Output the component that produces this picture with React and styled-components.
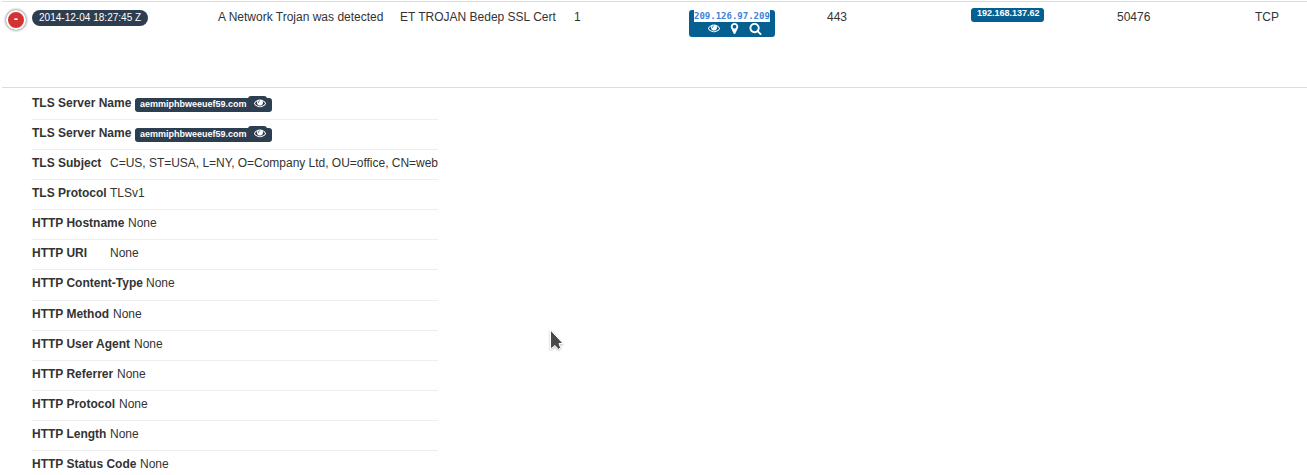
import React from "react";
import styled, { createGlobalStyle } from "styled-components";

const Global = createGlobalStyle`
  html, body { margin: 0; background: #fff; }
  body { overflow: hidden; }
  * { box-sizing: border-box; }
`;

const Page = styled.main`
  position: relative;
  width: 1307px;
  height: 475px;
  padding: 1px 0 0 2px;
  overflow: hidden;
  font: 12px/17px "Liberation Sans", Arial, sans-serif;
  color: #333;
`;

const AlertRow = styled.section`
  display: grid;
  grid-template-columns: 30px 186px 182px 174px 115px 138px 144px 146px 138px 1fr;
  align-items: start;
  height: 86px;
  border-top: 1px solid #ddd;
`;

const Cell = styled.div`
  padding-top: 7px;
  white-space: nowrap;
`;

const Toggle = styled.button`
  display: flex;
  align-items: center;
  justify-content: center;
  width: 20px;
  height: 20px;
  margin: 8px 0 0 4px;
  padding: 0 0 3px;
  border: 2px solid #fff;
  border-radius: 50%;
  background: #d33333;
  box-shadow: 0 0 3px #444;
  color: #fff;
  font: bold 12px/14px "Liberation Sans", Arial, sans-serif;
`;

const TimePill = styled.span`
  display: block;
  width: 116px;
  height: 16px;
  margin-top: 8px;
  padding-left: 7px;
  border-radius: 8px;
  background: #2c3e50;
  color: #fff;
  font-size: 10.05px;
  line-height: 15px;
  white-space: nowrap;
`;

const SourceIp = styled.div`
  width: 86px;
  height: 27px;
  margin-top: 8px;
  padding-left: 5px;
  border-radius: 3px;
  background: #065f91;
  color: #fff;
`;

const SelectedIp = styled.code`
  display: block;
  width: 76px;
  height: 12px;
  background: #fff;
  color: #3d82dc;
  font: bold 9px/13px "DejaVu Sans Mono", monospace;
  white-space: nowrap;
`;

const IconRow = styled.div`
  display: flex;
  align-items: center;
  gap: 8px;
  height: 12px;
  padding-left: 14px;
`;

const Icon = styled.svg`
  display: block;
  flex: none;
  width: ${(p) => p.$size}px;
  height: ${(p) => p.$size}px;
  fill: currentColor;
`;

const DestIp = styled.span`
  display: block;
  width: 73px;
  height: 14px;
  margin-top: 6px;
  padding-left: 6px;
  border-radius: 3px;
  background: #065f91;
  color: #fff;
  font: bold 9px/11px "Liberation Sans", Arial, sans-serif;
  white-space: nowrap;
`;

const Details = styled.dl`
  display: flex;
  flex-direction: column;
  width: 406px;
  margin: 0 0 0 30px;
  padding-top: 2px;
`;

const Divider = styled.div`
  height: 1px;
  background: #ddd;
`;

const Detail = styled.div`
  display: flex;
  flex: none;
  height: ${(p) => p.$height || 30}px;
  padding-top: 5px;
  border-bottom: 1px solid #eee;
  white-space: nowrap;
`;

const Label = styled.dt`
  flex: none;
  width: ${(p) => p.$width}px;
  font-weight: bold;
`;

const Value = styled.dd`
  margin: 0;
  letter-spacing: -0.02px;
`;

const ServerBadge = styled.span`
  display: flex;
  width: 137px;
  height: 14px;
  margin-top: 3px;
  padding-left: 5px;
  border-radius: 3px;
  background: #2c3e50;
  color: #fff;
  font: bold 9px/13px "Liberation Sans", Arial, sans-serif;
  letter-spacing: 0;
`;

const ServerName = styled.span`
  width: 108px;
`;

const EyeTab = styled.span`
  display: block;
  height: 14px;
  width: 19px;
  margin-top: -2px;
  padding: 1px 0 0 6px;
  border-radius: 3px;
  background: #2c3e50;
`;

const Cursor = styled.svg`
  position: absolute;
  left: 549px;
  top: 329px;
  width: 15px;
  height: 22px;
  filter: drop-shadow(0 1px 1px #0004);
`;

const paths = {
  eye: "M1664 960q-152-236-381-353 61 104 61 225 0 185-131.5 316.5t-316.5 131.5-316.5-131.5-131.5-316.5q0-121 61-225-229 117-381 353 133 205 333.5 326.5t434.5 121.5 434.5-121.5 333.5-326.5zm-720-384q0-20-14-34t-34-14q-125 0-214.5 89.5t-89.5 214.5q0 20 14 34t34 14 34-14 14-34q0-86 61-147t147-61q20 0 34-14t14-34zm848 384q0 34-20 69-140 230-376.5 368.5t-499.5 138.5-499.5-139-376.5-368q-20-35-20-69t20-69q140-229 376.5-368t499.5-139 499.5 139 376.5 368q20 35 20 69z",
  marker: "M1152 640q0-106-75-181t-181-75-181 75-75 181 75 181 181 75 181-75 75-181zm256 0q0 109-33 179l-364 774q-16 33-47.5 52t-67.5 19-67.5-19-46.5-52l-365-774q-33-70-33-179 0-212 150-362t362-150 362 150 150 362z",
  search: "M1216 832q0-185-131.5-316.5t-316.5-131.5-316.5 131.5-131.5 316.5 131.5 316.5 316.5 131.5 316.5-131.5 131.5-316.5zm512 832q0 52-38 90t-90 38q-54 0-90-38l-343-342q-179 124-399 124-143 0-273.5-55.5t-225-150-150-225-55.5-273.5 55.5-273.5 150-225 225-150 273.5-55.5 273.5 55.5 225 150 150 225 55.5 273.5q0 220-124 399l343 343q37 37 37 90z",
};

const Glyph = ({ name, size = 12 }) => (
  <Icon $size={size} viewBox="0 0 1792 1792" aria-hidden="true">
    <path d={paths[name]} />
  </Icon>
);

const details = [
  { label: "TLS Server Name", width: 103, server: "aemmiphbweeuef59.com" },
  { label: "TLS Server Name", width: 103, server: "aemmiphbweeuef59.com" },
  { label: "TLS Subject", width: 78, value: "C=US, ST=USA, L=NY, O=Company Ltd, OU=office, CN=web" },
  { label: "TLS Protocol", width: 78, value: "TLSv1" },
  { label: "HTTP Hostname", width: 96, value: "None" },
  { label: "HTTP URI", width: 78, value: "None" },
  { label: "HTTP Content-Type", width: 114, value: "None", height: 31 },
  { label: "HTTP Method", width: 81, value: "None" },
  { label: "HTTP User Agent", width: 102, value: "None" },
  { label: "HTTP Referrer", width: 85, value: "None" },
  { label: "HTTP Protocol", width: 87, value: "None" },
  { label: "HTTP Length", width: 78, value: "None" },
  { label: "HTTP Status Code", width: 108, value: "None" },
];

export default function App() {
  return (
    <Page>
      <Global />
      <AlertRow>
        <Toggle aria-label="Collapse">-</Toggle>
        <TimePill>2014-12-04 18:27:45 Z</TimePill>
        <Cell>A Network Trojan was detected</Cell>
        <Cell>ET TROJAN Bedep SSL Cert</Cell>
        <Cell>1</Cell>
        <SourceIp>
          <SelectedIp>209.126.97.209</SelectedIp>
          <IconRow>
            <Glyph name="eye" />
            <Glyph name="marker" size={13} />
            <Glyph name="search" size={13} />
          </IconRow>
        </SourceIp>
        <Cell>443</Cell>
        <DestIp>192.168.137.62</DestIp>
        <Cell>50476</Cell>
        <Cell>TCP</Cell>
      </AlertRow>
      <Divider />
      <Details>
        {details.map((d, i) => (
          <Detail key={i} $height={d.height}>
            <Label $width={d.width}>{d.label}</Label>
            <Value>
              {d.server ? (
                <ServerBadge>
                  <ServerName>{d.server}</ServerName>
                  <EyeTab><Glyph name="eye" /></EyeTab>
                </ServerBadge>
              ) : d.value}
            </Value>
          </Detail>
        ))}
      </Details>
      <Cursor viewBox="0 0 15 22">
        <path d="M1.5 1V20L6 16.5L9.5 20.5L11.5 18.5L10 14.5H14Z" fill="#484848" stroke="#fff" />
      </Cursor>
    </Page>
  );
}
